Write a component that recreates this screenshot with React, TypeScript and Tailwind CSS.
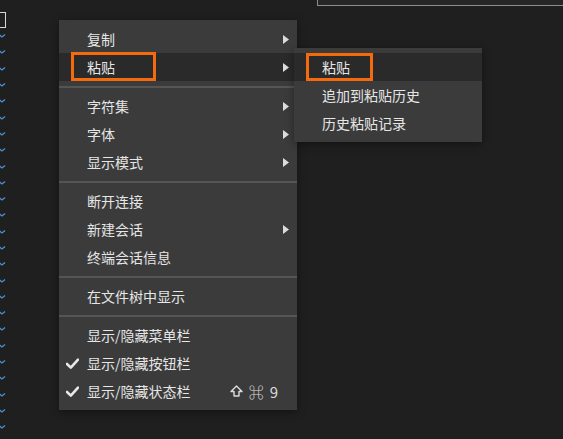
import React from "react";

type Item = { label: string; sub?: boolean; check?: boolean; shortcut?: boolean; active?: boolean };

const groups: Item[][] = [
  [{ label: "复制", sub: true }, { label: "粘贴", sub: true, active: true }],
  [{ label: "字符集", sub: true }, { label: "字体", sub: true }, { label: "显示模式", sub: true }],
  [{ label: "断开连接" }, { label: "新建会话", sub: true }, { label: "终端会话信息" }],
  [{ label: "在文件树中显示" }],
  [
    { label: "显示/隐藏菜单栏" },
    { label: "显示/隐藏按钮栏", check: true },
    { label: "显示/隐藏状态栏", check: true, shortcut: true },
  ],
];

const font = { fontFamily: '"Noto Sans CJK SC", "Noto Sans", sans-serif' };

function Arrow() {
  return (
    <svg width="6" height="9" viewBox="0 0 6 9" className="absolute right-[8px] top-[10px]">
      <path d="M0 0 L6 4.5 L0 9 Z" fill="#dcdcdc" />
    </svg>
  );
}

function Check() {
  return (
    <svg width="13" height="11" viewBox="0 0 13 11" className="absolute left-[7px] top-[9px]">
      <path d="M1 6 L4.8 9.6 L12 1.6" stroke="#e8e8e8" strokeWidth="2.6" fill="none" strokeLinecap="round" strokeLinejoin="round" />
    </svg>
  );
}

function Shortcut() {
  return (
    <span className="ml-auto mr-[19px] flex items-center gap-[6px] text-[#dcdcdc]">
      <svg width="13" height="12" viewBox="0 0 13 12">
        <path d="M6.5 1 L12 6.5 L9 6.5 L9 11 L4 11 L4 6.5 L1 6.5 Z" stroke="#dcdcdc" strokeWidth="1.4" fill="none" strokeLinejoin="round" />
      </svg>
      <span className="text-[15px] leading-none">⌘</span>
      <span className="text-[15px] leading-none">9</span>
    </span>
  );
}

function Row({ item }: { item: Item }) {
  return (
    <div className={`relative h-[28px] flex items-center pl-[28px] text-[14px] text-[#e6e6e6] ${item.active ? "bg-[#2a2a2a]" : ""}`}>
      {item.check && <Check />}
      <span>{item.label}</span>
      {item.shortcut && <Shortcut />}
      {item.sub && <Arrow />}
    </div>
  );
}

function Chevron() {
  return (
    <div className="h-[16.3px] flex items-center">
      <svg width="6" height="4" viewBox="0 0 6 4">
        <path d="M-1 0.5 L2 3 L5 0.5" stroke="#4f8fd6" strokeWidth="1.3" fill="none" />
      </svg>
    </div>
  );
}

export default function App() {
  return (
    <div className="relative w-[563px] h-[439px] overflow-hidden bg-[#1f1f1f] flex" style={font}>
      {/* left gutter */}
      <div className="w-[6px] pt-[12px] flex flex-col">
        <div className="w-[6px] h-[16px] border border-l-0 border-[#d8d8d8]" />
        {Array.from({ length: 25 }).map((_, i) => (
          <Chevron key={i} />
        ))}
      </div>

      {/* top-right panel */}
      <div className="ml-auto mt-[-10px] w-[246px] h-[16px] bg-[#262626] border border-r-0 border-[#8c8c8c]" />

      {/* main context menu */}
      <div className="absolute left-[59px] top-[20px] w-[238px] bg-[#3b3b3b] py-[5px] shadow-[0_2px_8px_rgba(0,0,0,0.4)]">
        {groups.map((g, gi) => (
          <div key={gi}>
            {gi > 0 && (
              <div className="h-[11px] flex items-center">
                <div className="w-full h-[2px] bg-[#555555]" />
              </div>
            )}
            {g.map((it) => (
              <Row key={it.label} item={it} />
            ))}
          </div>
        ))}
      </div>

      {/* submenu */}
      <div className="absolute left-[294px] top-[48px] w-[188px] bg-[#3b3b3b] py-[5px] shadow-[0_2px_8px_rgba(0,0,0,0.4)]">
        <Row item={{ label: "粘贴", active: true }} />
        <Row item={{ label: "追加到粘贴历史" }} />
        <Row item={{ label: "历史粘贴记录" }} />
      </div>

      {/* annotation boxes */}
      <div className="absolute left-[71px] top-[52px] w-[85px] h-[29px] border-[3px] border-[#f56a0c]" />
      <div className="absolute left-[306px] top-[53px] w-[67px] h-[28px] border-[3px] border-[#f56a0c]" />
    </div>
  );
}
